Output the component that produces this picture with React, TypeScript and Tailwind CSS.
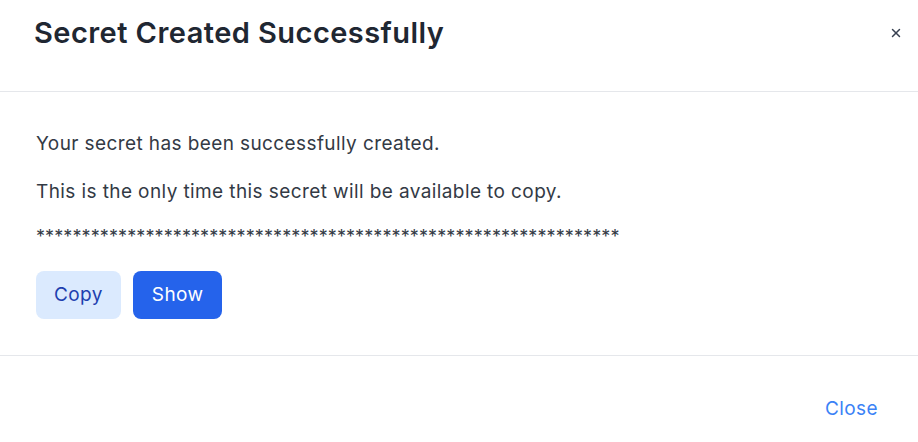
import { X } from 'lucide-react'

export default function App() {
  const masked = '*'.repeat(64)

  return (
    <div className="w-[918px] h-[442px] bg-white text-[#1f2937] overflow-hidden" style={{ fontFamily: 'Inter, "Noto Sans", sans-serif' }}>
      {/* Header */}
      <div className="flex items-center justify-between h-[92px] pl-[34px] pr-[11px] pb-[26px] border-b border-[#e5e7eb]">
        <h2 className="text-[29px] font-semibold text-[#1f2732] tracking-[0.45px]">Secret Created Successfully</h2>
        <button className="text-[#374151] p-1" aria-label="Close">
          <X className="w-[14px] h-[14px]" strokeWidth={2.5} />
        </button>
      </div>

      {/* Body */}
      <div className="px-[36px] pt-[40px] h-[264px] border-b border-[#e5e7eb] tracking-[0.4px]">
        <p className="text-[19px] leading-[24px] text-[#333a45]">Your secret has been successfully created.</p>
        <p className="text-[19px] leading-[24px] text-[#333a45] mt-[24px]">
          This is the only time this secret will be available to copy.
        </p>
        <p className="text-[18px] leading-[24px] text-[#333a45] mt-[21px] tracking-[0.1px]">{masked}</p>
        <div className="flex gap-3 mt-[22px]">
          <button className="h-[48px] px-[18px] rounded-lg bg-[#dbeafe] text-[#1e40af] text-[19px]">Copy</button>
          <button className="h-[48px] px-[19px] rounded-lg bg-[#2563eb] text-white text-[19px]">Show</button>
        </div>
      </div>

      {/* Footer */}
      <div className="flex justify-end items-center h-[106px] pr-[40px] pt-[1px]">
        <button className="text-[19px] tracking-[0.4px] text-[#3b82f6]">Close</button>
      </div>
    </div>
  )
}
